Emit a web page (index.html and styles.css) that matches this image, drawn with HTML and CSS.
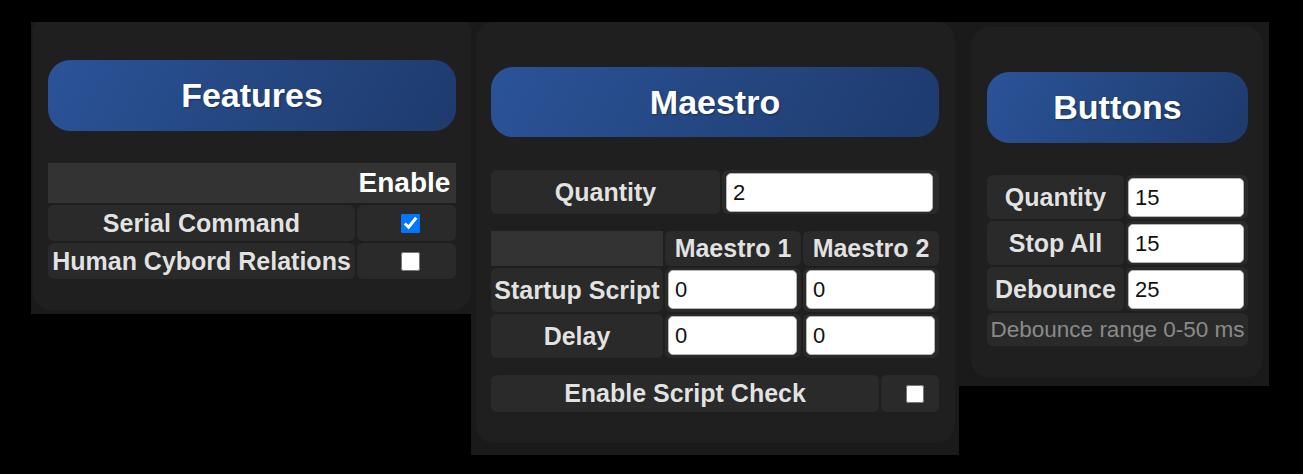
FILE: index.html
```html
<!DOCTYPE html>
<html lang="en">
<head>
<meta charset="utf-8">
<title>Settings panels</title>
<link rel="stylesheet" href="styles.css">
</head>
<body>
<div class="stage">
  <div class="shot shot-features">
    <section class="card card-features">
      <h2 class="pill">Features</h2>
      <div class="grid features-grid">
        <div class="thead">
          <div class="th"></div>
          <div class="th th-strong">Enable</div>
        </div>
        <div class="cell label">Serial Command</div>
        <div class="cell check"><input type="checkbox" checked></div>
        <div class="cell label">Human Cybord Relations</div>
        <div class="cell check"><input type="checkbox"></div>
      </div>
    </section>
  </div>

  <div class="shot shot-maestro">
    <section class="card card-maestro">
      <h2 class="pill">Maestro</h2>
      <div class="grid qty-grid">
        <div class="cell label">Quantity</div>
        <div class="cell field field-wide"><input type="text" value="2"></div>
      </div>
      <div class="grid maestro-grid">
        <div class="cell empty-head"></div>
        <div class="cell label">Maestro 1</div>
        <div class="cell label">Maestro 2</div>
        <div class="cell label">Startup Script</div>
        <div class="cell field field-m"><input type="text" value="0"></div>
        <div class="cell field field-m"><input type="text" value="0"></div>
        <div class="cell label">Delay</div>
        <div class="cell field field-m"><input type="text" value="0"></div>
        <div class="cell field field-m"><input type="text" value="0"></div>
      </div>
      <div class="grid check-grid">
        <div class="cell label">Enable Script Check</div>
        <div class="cell check"><input type="checkbox"></div>
      </div>
    </section>
  </div>

  <div class="shot shot-buttons">
    <section class="card card-buttons">
      <h2 class="pill">Buttons</h2>
      <div class="grid buttons-grid">
        <div class="cell label">Quantity</div>
        <div class="cell field field-b"><input type="text" value="15"></div>
        <div class="cell label">Stop All</div>
        <div class="cell field field-b"><input type="text" value="15"></div>
        <div class="cell label">Debounce</div>
        <div class="cell field field-b"><input type="text" value="25"></div>
        <div class="cell note">Debounce range 0-50 ms</div>
      </div>
    </section>
  </div>
</div>
</body>
</html>
```

FILE: styles.css
```css
* { box-sizing: border-box; }

html, body {
  margin: 0;
  padding: 0;
  background: #000;
}

body {
  width: 1303px;
  height: 474px;
  overflow: hidden;
  font-family: "Liberation Sans", Arial, sans-serif;
  color: #e2e2e2;
}

.stage {
  display: flex;
  align-items: flex-start;
  padding: 22px 0 0 31px;
}

.shot {
  background: #1a1a1a;
  overflow: hidden;
  flex: none;
}

.shot-features {
  width: 440px;
  height: 292px;
  padding: 0 0 0 2px;
}

.shot-maestro {
  width: 488px;
  height: 433px;
  padding: 0 0 0 5px;
}

.shot-buttons {
  width: 310px;
  height: 364px;
  padding: 5px 0 0 12px;
}

.card {
  background: #1f1f1f;
  border-radius: 18px;
  display: flex;
  flex-direction: column;
}

.card-features {
  width: 438px;
  height: 295px;
  margin-top: -7px;
  padding: 45px 15px 31px 15px;
}

.card-maestro {
  width: 479px;
  height: 421px;
  padding: 45px 16px 31px 15px;
}

.card-buttons {
  width: 292px;
  height: 351px;
  padding: 45px 15px 32px 16px;
}

.pill {
  margin: 0 0 32px 0;
  height: 71px;
  border-radius: 22px;
  background: linear-gradient(120deg, #2b5399 0%, #24467f 55%, #1e3a6e 100%);
  color: #fff;
  font-size: 34px;
  font-weight: bold;
  display: flex;
  align-items: center;
  justify-content: center;
  text-shadow: 1px 1px 2px rgba(0, 0, 0, 0.35);
  flex: none;
}

.card-maestro .pill {
  height: 70px;
  margin-bottom: 33px;
}

.grid {
  display: grid;
  gap: 2px;
}

.cell {
  background: #2a2a2a;
  border-radius: 6px;
  display: flex;
  align-items: center;
  justify-content: center;
  white-space: nowrap;
}

.label {
  font-size: 25px;
  font-weight: bold;
  color: #e2e2e2;
  text-shadow: 0 0 1px rgba(0, 0, 0, 0.6);
}

/* Features */
.features-grid {
  grid-template-columns: 307px 99px;
  grid-template-rows: 40px 36px 36px;
}

.thead {
  grid-column: 1 / -1;
  display: grid;
  grid-template-columns: 307px 101px;
  background: #333;
}

.th {
  display: flex;
  align-items: center;
  justify-content: center;
}

.th-strong {
  font-size: 28px;
  font-weight: bold;
  color: #fff;
  padding-right: 2px;
}

.check input {
  width: 19px;
  height: 19px;
  margin: 0 0 0 8px;
}

/* Maestro */
.qty-grid {
  grid-template-columns: 229px 217px;
  grid-template-rows: 44px;
  margin-bottom: 17px;
}

.maestro-grid {
  grid-template-columns: 172px 136px 136px;
  grid-template-rows: 35px 44px 44px;
  margin-bottom: 17px;
}

.empty-head {
  background: #333;
  border-radius: 0;
}

.check-grid {
  grid-template-columns: 388px 58px;
  grid-template-rows: 37px;
}

.check-grid .check input {
  width: 18px;
  height: 18px;
  margin-left: 10px;
}

.field {
  align-items: stretch;
  justify-content: stretch;
}

.field input {
  width: 100%;
  height: 100%;
  border: 1px solid #b5b5b5;
  border-radius: 5px;
  background: #fff;
  color: #111;
  font-family: "Liberation Sans", Arial, sans-serif;
  font-size: 22px;
  padding: 0 6px;
  margin: 0;
  outline: none;
}

.field-wide {
  padding: 3px 6px 2px 4px;
}

.field-m {
  padding: 2px 4px 3px 3px;
}

/* Buttons */
.buttons-grid {
  grid-template-columns: 137px 122px;
  grid-template-rows: 44px 44px 44px 33px;
}

.field-b {
  padding: 3px 4px 2px 2px;
}

.note {
  grid-column: 1 / -1;
  font-size: 22.5px;
  color: #8a8a8a;
  overflow: visible;
}
```
